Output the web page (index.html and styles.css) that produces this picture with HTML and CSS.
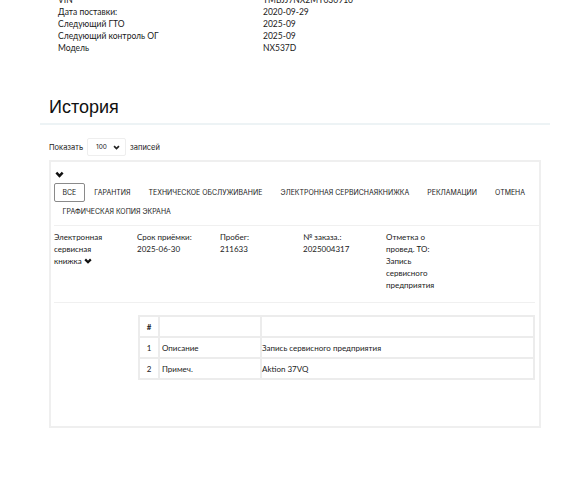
FILE: index.html
```html
<!DOCTYPE html>
<html lang="ru">
<head>
<meta charset="utf-8">
<link rel="stylesheet" href="styles.css">
</head>
<body>
<div class="info">
  <div>VIN</div><div>TMBJJ7NX2MY030910</div>
  <div>Дата поставки:</div><div>2020-09-29</div>
  <div>Следующий ГТО</div><div>2025-09</div>
  <div>Следующий контроль ОГ</div><div>2025-09</div>
  <div>Модель</div><div>NX537D</div>
</div>

<h2 class="title">История</h2>
<div class="rule"></div>

<div class="length">
  <span>Показать</span>
  <div class="select"><span>100</span>
    <svg width="7" height="5" viewBox="0 0 10 7"><polyline points="1.5,1.5 5,5 8.5,1.5" fill="none" stroke="#222" stroke-width="2.4"/></svg>
  </div>
  <span>записей</span>
</div>

<div class="panel">
  <div class="toggle">
    <svg width="9" height="7" viewBox="0 0 10 7"><polyline points="1.5,1.5 5,5 8.5,1.5" fill="none" stroke="#111" stroke-width="2.8"/></svg>
  </div>
  <div class="tabs-wrap">
    <div class="tabs">
      <span class="tab active">Все</span>
      <span class="tab">Гарантия</span>
      <span class="tab">Техническое обслуживание</span>
      <span class="tab">Электронная сервиснаякнижка</span>
      <span class="tab">Рекламации</span>
      <span class="tab">Отмена</span>
      <span class="tab">Графическая копия экрана</span>
    </div>
  </div>

  <div class="details">
    <div>Электронная сервисная книжка <svg class="mini" width="8" height="6" viewBox="0 0 10 7"><polyline points="1.5,1.5 5,5 8.5,1.5" fill="none" stroke="#111" stroke-width="2.8"/></svg></div>
    <div>Срок приёмки:<br>2025-06-30</div>
    <div>Пробег:<br>211633</div>
    <div>№ заказа.:<br>2025004317</div>
    <div>Отметка о провед. ТО:<br>Запись сервисного предприятия</div>
  </div>

  <div class="sub">
    <table class="grid">
      <tr><th class="num">#</th><th class="key"></th><th></th></tr>
      <tr><td class="num">1</td><td class="key">Описание</td><td>Запись сервисного предприятия</td></tr>
      <tr><td class="num">2</td><td class="key">Примеч.</td><td>Aktion 37VQ</td></tr>
    </table>
  </div>
</div>
</body>
</html>
```

FILE: styles.css
```css
html, body {
  margin: 0;
  padding: 0;
  background: #fff;
  color: #1a1a1a;
}
body {
  font-family: Lato, "Open Sans", sans-serif;
  width: 588px;
  overflow: hidden;
}
.info {
  display: grid;
  grid-template-columns: 205px auto;
  margin: -6px 0 0 58px;
  font-size: 8.5px;
  line-height: 12px;
}
.title {
  margin: 41px 0 0 49px;
  font-family: "Liberation Sans", Arial, sans-serif;
  font-weight: normal;
  font-size: 18px;
  line-height: 24px;
  color: #111;
}
.rule {
  margin: 4px 0 0 40px;
  width: 510px;
  height: 2px;
  background: #edf3f5;
}
.length {
  display: flex;
  align-items: center;
  margin: 13px 0 0 49px;
  font-family: Inter, "Liberation Sans", sans-serif;
  font-size: 7.5px;
  color: #222;
}
.select {
  display: flex;
  align-items: center;
  justify-content: space-between;
  box-sizing: border-box;
  width: 39px;
  height: 18px;
  margin: 0 4px 0 4px;
  padding: 0 5px 0 8px;
  border: 1px solid #eeeeee;
  border-radius: 2px;
  font-size: 6.5px;
}
.panel {
  box-sizing: border-box;
  width: 492px;
  height: 268px;
  margin: 4px 0 0 49px;
  border: 2px solid #efefef;
  padding: 9px 0 0 3px;
}
.toggle {
  height: 12px;
  padding-left: 1px;
  line-height: 0;
}
.tabs-wrap {
  padding-bottom: 4px;
  border-bottom: 1px solid #f0f0f0;
}
.tabs {
  display: flex;
  flex-wrap: wrap;
  column-gap: 1px;
  margin-right: -14px;
  font-family: Inter, "Liberation Sans", sans-serif;
  font-size: 6.95px;
  text-transform: uppercase;
  color: #222;
}
.tab {
  box-sizing: border-box;
  height: 19px;
  line-height: 17px;
  padding: 0 7.5px;
  border: 1px solid transparent;
  border-radius: 2px;
  white-space: nowrap;
}
.tab.active {
  border-color: #8a8a8a;
}
.details {
  display: grid;
  grid-template-columns: repeat(5, 83px);
  margin-right: 4px;
  padding: 5px 0 11px;
  border-bottom: 1px solid #f0f0f0;
  font-size: 8px;
  line-height: 12px;
  min-height: 60px;
}
.details > div {
  padding-right: 20px;
}
.mini {
  vertical-align: 0;
}
.sub {
  padding: 12px 0 0 84px;
}
.grid {
  width: 397px;
  border-collapse: collapse;
  font-size: 8px;
}
.grid th, .grid td {
  border: 2px solid #ececec;
  height: 19px;
  padding: 0;
  text-align: left;
}
.grid .num {
  width: 18px;
  text-align: center;
}
.grid .key {
  width: 98px;
  padding-left: 2px;
}
.grid th {
  font-weight: bold;
}
```
